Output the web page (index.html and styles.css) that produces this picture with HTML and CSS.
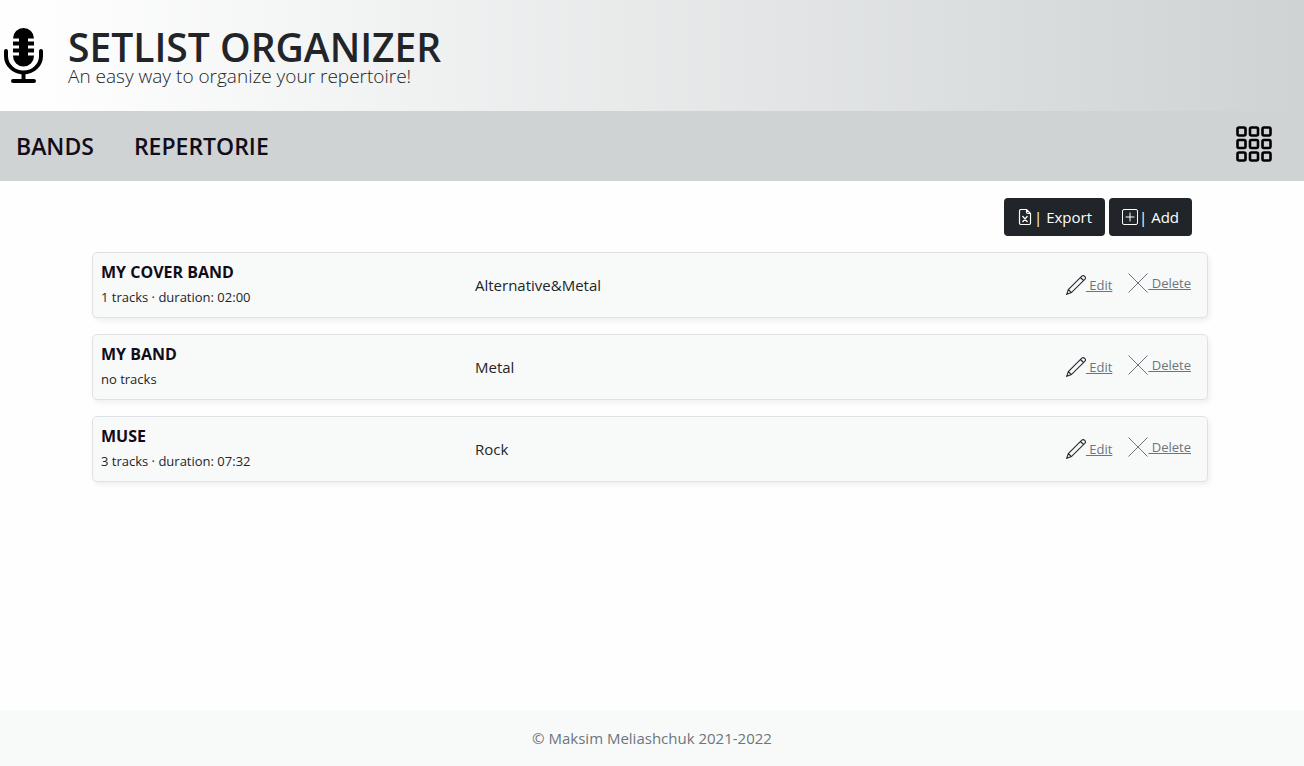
FILE: index.html
```html
<!DOCTYPE html>
<html lang="en">
<head>
<meta charset="utf-8">
<meta name="viewport" content="width=device-width, initial-scale=1">
<title>Setlist Organizer</title>
<link rel="stylesheet" href="styles.css">
</head>
<body>
<svg class="sprite" aria-hidden="true">
  <symbol id="pencil" viewBox="0 0 20 20">
    <path d="M.7 19.300 2.300 14.500 15.800 1.200Q17.200 0 18.700 1.400T18.800 4.300L5.400 17.600ZM14.500 2.500 17.500 5.500M2.300 14.500 5.400 17.600" fill="none" stroke="currentColor" stroke-width="1.100"/>
  </symbol>
  <symbol id="cross" viewBox="0 0 20 20">
    <path d="M.5.5 19.5 19.5M19.5.5.5 19.5" fill="none" stroke="currentColor"/>
  </symbol>
</svg>
<header class="banner">
  <svg class="mic" viewBox="0 0 40 56" aria-hidden="true">
    <path d="M9 10.500a10.500 10.500 0 0 1 21 0h-6v3h6v4h-6v3h6v4h-6v3h6v.500a10.500 10.500 0 0 1-21 0v-.500h6v-3H9v-4h6v-3H9v-4h6v-3z"/>
    <path d="M2 23v5a17.500 16.500 0 0 0 35 0v-5M19.500 45v8M9 53h21" fill="none" stroke="currentColor" stroke-width="4" stroke-linecap="round"/>
  </svg>
  <div>
    <h1 class="title">SETLIST ORGANIZER</h1>
    <p class="tagline">An easy way to organize your repertoire!</p>
  </div>
</header>
<nav class="nav">
  <a class="nav-link" href="#bands">BANDS</a>
  <a class="nav-link" href="#repertorie">REPERTORIE</a>
  <button class="menu" type="button" aria-label="Menu">
    <svg viewBox="0 0 36 36" width="36" height="36" fill="none" stroke="currentColor" stroke-width="2.600" aria-hidden="true">
      <rect x="1.500" y="1.500" width="8" height="8" rx="1.500"/><rect x="14" y="1.500" width="8" height="8" rx="1.500"/><rect x="26.500" y="1.500" width="8" height="8" rx="1.500"/>
      <rect x="1.500" y="14" width="8" height="8" rx="1.500"/><rect x="14" y="14" width="8" height="8" rx="1.500"/><rect x="26.500" y="14" width="8" height="8" rx="1.500"/>
      <rect x="1.500" y="26.500" width="8" height="8" rx="1.500"/><rect x="14" y="26.500" width="8" height="8" rx="1.500"/><rect x="26.500" y="26.500" width="8" height="8" rx="1.500"/>
    </svg>
  </button>
</nav>
<main class="main">
  <div class="toolbar">
    <button class="btn" type="button">
      <svg width="16" height="16" viewBox="0 0 16 16" fill="none" stroke="currentColor" stroke-width="1.200" aria-hidden="true"><path d="M9.500.5H4A1.500 1.500 0 0 0 2.500 2v12A1.500 1.500 0 0 0 4 15.500h8a1.500 1.500 0 0 0 1.500-1.500V4.500L9.500.5V3A1.500 1.500 0 0 0 11 4.500h2.500M5.500 7l5 6M10.500 7l-5 6"/></svg>
      <span>| Export</span>
    </button>
    <button class="btn" type="button">
      <svg width="16" height="16" viewBox="0 0 16 16" fill="none" stroke="currentColor" aria-hidden="true"><rect x=".5" y=".5" width="15" height="15" rx="1.500"/><path d="M8 4v8M4 8h8" stroke-linecap="round"/></svg>
      <span>| Add</span>
    </button>
  </div>
  <ul class="list">
    <li class="card">
      <div><h2 class="name">MY COVER BAND</h2><p class="info">1 tracks · duration: 02:00</p></div>
      <p class="genre">Alternative&amp;Metal</p>
      <div class="actions">
        <a class="action" href="#edit-1"><svg class="icon pencil"><use href="#pencil"/></svg><span>&nbsp;Edit</span></a>
        <a class="action delete" href="#delete-1"><svg class="icon"><use href="#cross"/></svg><span>&nbsp;Delete</span></a>
      </div>
    </li>
    <li class="card">
      <div><h2 class="name">MY BAND</h2><p class="info">no tracks</p></div>
      <p class="genre">Metal</p>
      <div class="actions">
        <a class="action" href="#edit-2"><svg class="icon pencil"><use href="#pencil"/></svg><span>&nbsp;Edit</span></a>
        <a class="action delete" href="#delete-2"><svg class="icon"><use href="#cross"/></svg><span>&nbsp;Delete</span></a>
      </div>
    </li>
    <li class="card">
      <div><h2 class="name">MUSE</h2><p class="info">3 tracks · duration: 07:32</p></div>
      <p class="genre">Rock</p>
      <div class="actions">
        <a class="action" href="#edit-3"><svg class="icon pencil"><use href="#pencil"/></svg><span>&nbsp;Edit</span></a>
        <a class="action delete" href="#delete-3"><svg class="icon"><use href="#cross"/></svg><span>&nbsp;Delete</span></a>
      </div>
    </li>
  </ul>
</main>
<footer class="footer">© Maksim Meliashchuk 2021-2022</footer>
</body>
</html>
```
FILE: styles.css
```css
* { box-sizing: border-box; }
body {
  margin: 0;
  min-height: 100vh;
  display: flex;
  flex-direction: column;
  background: #fefefe;
  color: #212529;
  font: 15px/24px "Open Sans", "Noto Sans", sans-serif;
}
h1, h2, p, ul { margin: 0; padding: 0; }
.sprite { display: none; }
.banner {
  display: flex;
  align-items: center;
  gap: 24px;
  padding: 26px 4px 26px 4px;
  background: linear-gradient(to right, #fefefe 3%, #cfd3d4);
}
.mic { width: 40px; height: 56px; color: #000; }
.title { font-size: 39px; line-height: 42px; font-weight: 600; }
.tagline { font-size: 19px; line-height: 17px; font-weight: 300; }
.nav {
  display: flex;
  align-items: center;
  gap: 40px;
  height: 70px;
  padding: 0 32px 0 16px;
  background: #cfd3d4;
}
.nav-link { color: #120c18; font-size: 23px; line-height: 36px; font-weight: 600; text-decoration: none; }
.menu { margin: 0 0 4px auto; padding: 0; border: 0; background: none; color: #000; }
.menu svg { display: block; }
.main { flex: 1; padding: 17px 96px 24px 92px; }
.toolbar { display: flex; justify-content: flex-end; gap: 4px; margin-right: 16px; }
.btn {
  display: flex;
  align-items: center;
  gap: 1px;
  height: 38px;
  padding: 0 13px;
  border: 0;
  border-radius: 4px;
  background: #212529;
  color: #fff;
  font: inherit;
}
.list { display: grid; gap: 16px; margin-top: 16px; list-style: none; }
.card {
  display: grid;
  grid-template-columns: 1fr 1fr 1fr;
  align-items: center;
  height: 66px;
  padding: 0 8px;
  border: 1px solid #dee2e3;
  border-radius: 5px;
  background: #f8faf9;
  box-shadow: 2px 3px 5px #0000000f;
}
.name { color: #120c18; font-size: 16px; line-height: 24px; font-weight: 700; }
.info { font-size: 13px; line-height: 26px; }
.genre { padding-left: 8px; }
.actions { display: flex; justify-content: flex-end; gap: 16px; padding-right: 8px; }
.action { display: flex; align-items: center; color: #6c757d; font-size: 13px; text-decoration: none; }
.action span { text-decoration: underline; }
.delete { padding-bottom: 4px; }
.icon { width: 20px; height: 20px; }
.pencil { color: #2b2433; }
.footer { padding: 16px; background: #f8faf9; color: #6c757d; text-align: center; }
```
